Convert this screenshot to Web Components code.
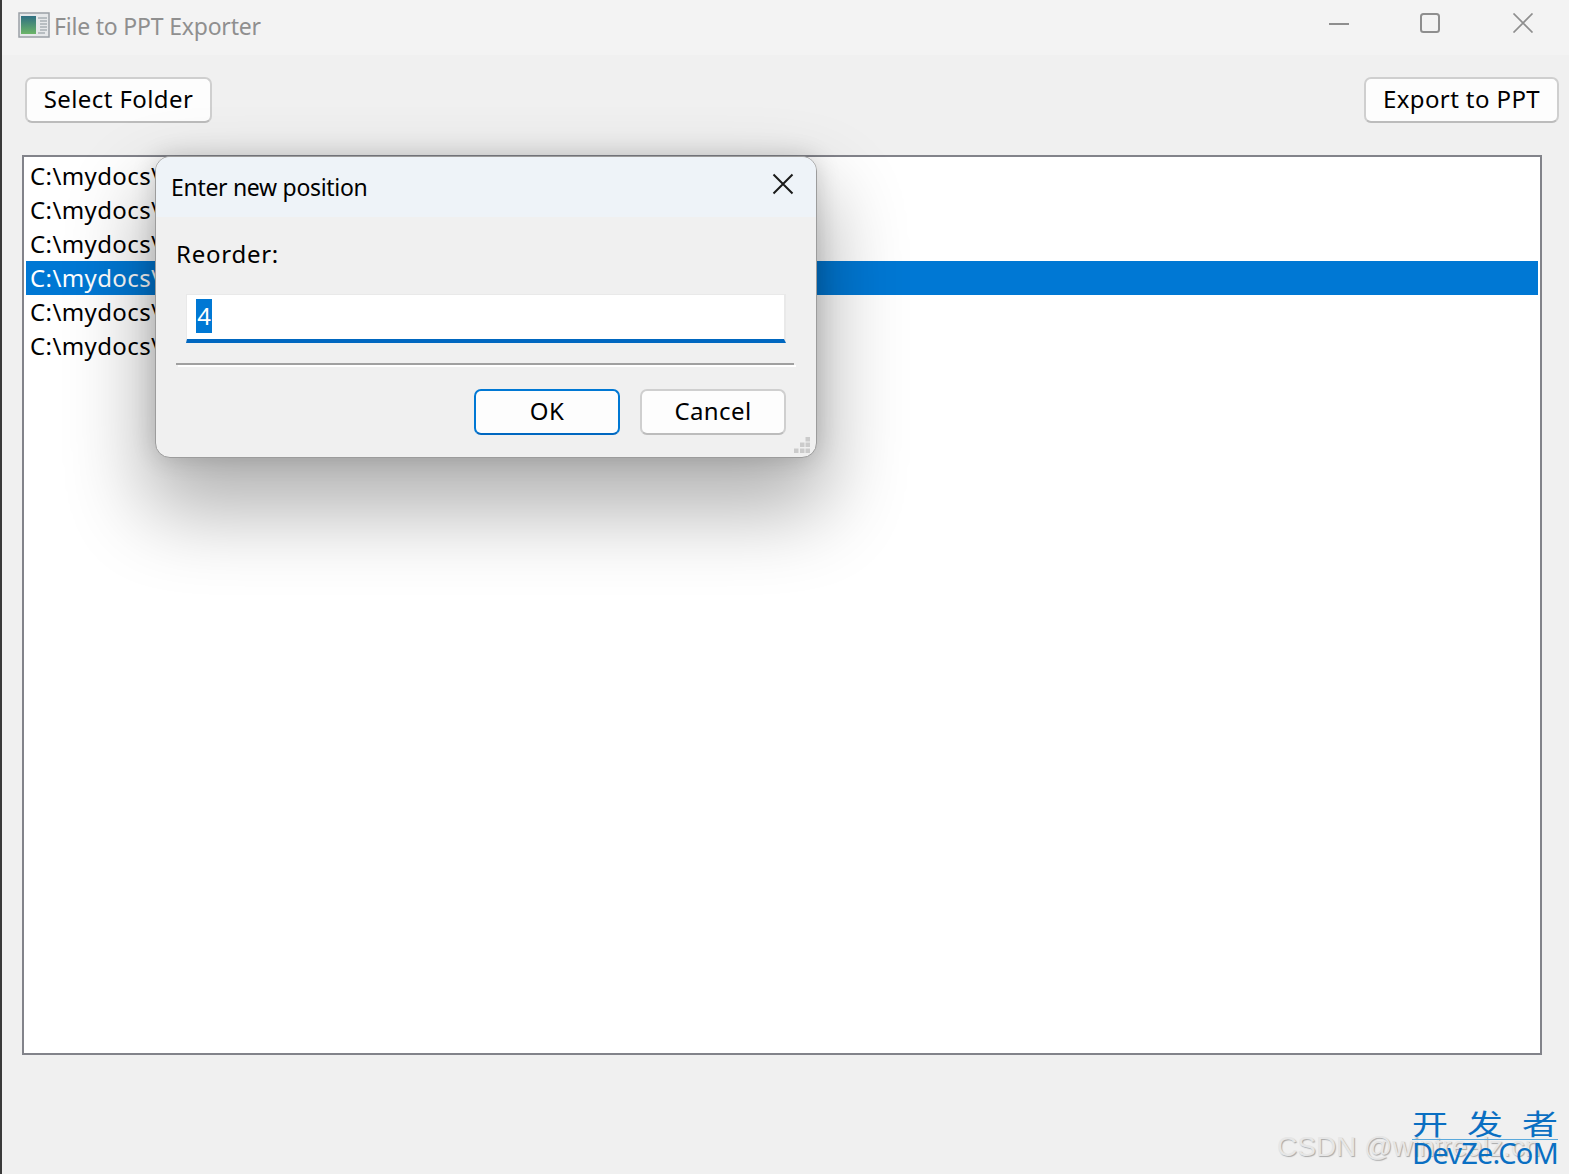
<!DOCTYPE html>
<html><head><meta charset="utf-8"><style>
html,body{margin:0;padding:0;height:100%;overflow:hidden;background:#f0f0f0}
body{font-family:"Noto Sans","Open Sans",sans-serif;color:#000}
</style></head><body>
<app-window></app-window>
<script>
function def(name,html,props){
  customElements.define(name,class extends HTMLElement{
    constructor(){super();this.attachShadow({mode:'open'}).innerHTML=html;}
  });
}
def('ui-button',`<style>
:host{display:block;box-sizing:border-box;height:46px;border:2px solid #cfcfcf;border-bottom-color:#bcbcbc;border-radius:7px;background:#fdfdfd;font-size:24px;line-height:40px;text-align:center;color:#000;letter-spacing:.4px;white-space:nowrap}
:host([primary]){border-color:#0067c0;border-top-color:#0078d4;border-left-color:#0078d4;border-right-color:#0078d4}
</style><slot></slot>`);
def('title-bar',`<style>
:host{display:flex;align-items:center;height:55px;background:#f3f3f3;box-sizing:border-box;padding-left:16px;color:#8f8f8f;font-size:23px;flex:none}
span{margin-left:4px;letter-spacing:-.2px;position:relative;top:-2px}
svg{display:block;flex:none}
.icon{margin-top:-6px}
.ctl{display:flex;margin-left:auto;align-items:center;gap:70px;padding-right:35px;margin-top:-9px}
</style>
<svg class="icon" width="32" height="26" viewBox="0 0 32 26"><rect x="1" y="1" width="30" height="24" fill="#e6e8ea" stroke="#9aa0a6" stroke-width="1.5"/><defs><linearGradient id="g" x1="0" y1="0" x2="0" y2="1"><stop offset="0" stop-color="#2f6f82"/><stop offset="1" stop-color="#6cb568"/></linearGradient></defs><rect x="3" y="4" width="15" height="18" fill="url(#g)"/><path d="M20 6h9M22 9h7M22 12h7M22 15h7M22 18h7M20 21h7" stroke="#a9b0b5" stroke-width="1.4"/></svg>
<span><slot></slot></span>
<div class="ctl">
<svg width="22" height="20" viewBox="0 0 22 20"><path d="M1 11h20" stroke="#8e8e8e" stroke-width="2"/></svg>
<svg width="20" height="20" viewBox="0 0 20 20"><rect x="1" y="1" width="18" height="18" rx="2.5" fill="none" stroke="#8e8e8e" stroke-width="2"/></svg>
<svg width="22" height="20" viewBox="0 0 22 20" style="margin-left:2px"><path d="M1.5 0.5l19 19M20.5 0.5l-19 19" stroke="#8e8e8e" stroke-width="1.7" fill="none"/></svg>
</div>`);
def('tool-bar',`<style>
:host{display:flex;justify-content:space-between;box-sizing:border-box;padding:22px 10px 0 25px;height:100px;flex:none}
</style><slot></slot>`);
def('list-box',`<style>
:host{display:block;box-sizing:border-box;height:900px;width:1520px;border:2px solid #82838a;background:#fff;padding:2px;flex:none}
</style><slot></slot>`);
def('list-row',`<style>
:host{display:block;height:34px;line-height:33px;padding-left:4px;font-size:24px;letter-spacing:.4px;color:#000;white-space:nowrap}
:host([selected]){background:#0078d4;color:#fff}
</style><slot></slot>`);
def('input-dialog',`<style>
:host{position:absolute;left:155px;top:156px;width:662px;height:302px;box-sizing:border-box;border:1px solid #9c9c9c;border-radius:15px;background:#f0f0f0;box-shadow:0 44px 80px 10px rgba(0,0,0,.3),0 0 24px rgba(0,0,0,.16);overflow:hidden;display:flex;flex-direction:column}
.head{height:60px;background:#eef3f8;display:flex;align-items:center;justify-content:space-between;padding:0 22px 0 15px;font-size:23px;flex:none;box-sizing:border-box;letter-spacing:-.3px}
.head span{position:relative}
.head svg{position:relative;top:-3px}
.body{padding:0 22px 0 20px;flex:1;display:flex;flex-direction:column;position:relative}
label{display:block;font-size:24px;line-height:34px;margin-top:20px;letter-spacing:.75px}
.in{box-sizing:border-box;height:49px;margin:23px 0 0 10px;width:600px;background:#fff;border:solid #e9e9e9;border-width:1px 2px 0 1px;border-bottom:4px solid #0067c0;padding:4px 0 0 9px;font-size:24px;line-height:34px}
.sel{display:block;width:16px;height:34px;background:#0078d4;color:#fff;text-align:center}
hr{margin:20px 0 0 0;border:0;height:2px;background:#a0a0a0;box-shadow:2px 2px 0 #fff}
.btns{display:grid;grid-template-columns:146px 146px;gap:20px;justify-content:end;margin:24px 8px 0 0}
.grip{position:absolute;right:6px;bottom:4px}
svg{display:block}
</style>
<div class="head"><span><slot name="title"></slot></span>
<svg width="22" height="22" viewBox="0 0 22 22"><path d="M1.5 1.5l19 19M20.5 1.5l-19 19" stroke="#1a1a1a" stroke-width="2" fill="none"/></svg></div>
<div class="body">
<label><slot name="label"></slot></label>
<div class="in"><span class="sel"><slot name="value"></slot></span></div>
<hr>
<div class="btns"><slot name="buttons"></slot></div>
<svg class="grip" width="16" height="16" viewBox="0 0 16 16" fill="#cbcbcb"><rect x="11.5" y="0" width="4.5" height="4.5"/><rect x="6" y="5.5" width="4.5" height="4.5"/><rect x="11.5" y="5.5" width="4.5" height="4.5"/><rect x="0" y="11.5" width="4.5" height="4.5"/><rect x="6" y="11.5" width="4.5" height="4.5"/><rect x="11.5" y="11.5" width="4.5" height="4.5"/></svg>
</div>`);
def('water-mark',`<style>
:host{position:absolute;right:0;bottom:0;width:292px;height:74px;overflow:hidden;display:block}
.csdn{position:absolute;left:0;top:31px;font:28px "Liberation Sans",sans-serif;color:#e6e6e6;text-shadow:1px 1px 1px #a9a9a9;white-space:nowrap}
.mark{position:absolute;left:135px;top:0;width:146px;color:#0a6fc2}
.cn{font:36px/49px "Noto Sans CJK SC",sans-serif;display:flex;justify-content:space-between;height:39px;}
.cn span{display:inline-block;transform:scale(1,.78)}
.en{border-top:1px solid #5aa9dc;font:29px/26px "Noto Sans",sans-serif;letter-spacing:-.8px;white-space:nowrap}
</style><div class="csdn"><slot name="a"></slot></div><div class="mark"><div class="cn"><span>开</span><span>发</span><span>者</span></div><div class="en"><slot name="b"></slot></div></div>`);
def('app-window',`<style>
:host{display:flex;flex-direction:column;box-sizing:border-box;width:1569px;height:1174px;background:#f0f0f0;border-left:2px solid #3a3a3a;position:relative;overflow:hidden}
list-box{margin-left:20px}
ui-button.a{width:187px}
ui-button.b{width:195px}
</style>
<title-bar>File to PPT Exporter</title-bar>
<tool-bar><ui-button class="a" style="margin-left:-2px">Select Folder</ui-button><ui-button class="b">Export to PPT</ui-button></tool-bar>
<list-box>
<list-row>C:\\mydocs\\</list-row><list-row>C:\\mydocs\\</list-row><list-row>C:\\mydocs\\</list-row><list-row selected>C:\\mydocs\\</list-row><list-row>C:\\mydocs\\</list-row><list-row>C:\\mydocs\\</list-row>
</list-box>
<input-dialog style="margin-left:-2px">
<span slot="title">Enter new position</span>
<span slot="label">Reorder:</span>
<span slot="value">4</span>
<ui-button slot="buttons" primary>OK</ui-button>
<ui-button slot="buttons">Cancel</ui-button>
</input-dialog>
<water-mark><span slot="a">CSDN @wintrealz.cn</span><span slot="b">DevZe.CoM</span></water-mark>`);
</script>
</body></html>
